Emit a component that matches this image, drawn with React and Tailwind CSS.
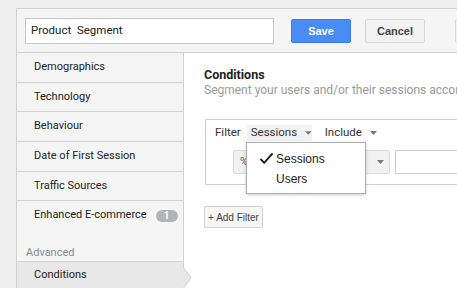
import React from "react";

const roboto = { fontFamily: "Roboto, 'Liberation Sans', sans-serif" };
const arial = { fontFamily: "'Liberation Sans', Arial, sans-serif" };

function Caret({ className = "" }) {
  return (
    <svg width="7" height="4" viewBox="0 0 7 4" className={className}>
      <path d="M0 0 L7 0 L3.5 4 Z" fill="#777" />
    </svg>
  );
}

function NavItem({ label, h, badge, border = true }) {
  return (
    <div
      className={`flex items-center pl-[17px] text-[11px] text-[#222] ${border ? "border-b border-[#d2d2d2]" : ""}`}
      style={{ height: h }}
    >
      <span>{label}</span>
      {badge && (
        <span className="ml-[9px] flex h-[12px] w-[22px] items-center justify-center rounded-full bg-[#b4b4b4] text-[10px] font-bold leading-none text-white">
          {badge}
        </span>
      )}
    </div>
  );
}

export default function App() {
  return (
    <div
      className="relative h-[288px] w-[457px] overflow-hidden bg-[#ededed] pl-[16px] pt-[8px]"
      style={roboto}
    >
      <div className="flex h-[280px] w-[460px] flex-col border-l border-t border-[#d0d0d0] bg-[#f5f5f5]">
        {/* header */}
        <div className="flex h-[44px] shrink-0 items-start border-b border-[#d0d0d0] pl-[8px] pt-[9px]">
          <div className="flex h-[26px] w-[249px] shrink-0 items-center border border-[#c6c6c6] bg-white pl-[5px] text-[11.5px] text-[#222]">
            Product&nbsp; Segment
          </div>
          <div
            className="ml-[17px] mt-[1px] flex h-[24px] w-[60px] shrink-0 items-center justify-center rounded-[2px] border border-[#3b7ded] bg-[#4a8cf6] text-[11px] font-bold text-white"
            style={arial}
          >
            Save
          </div>
          <div
            className="ml-[14px] mt-[1px] flex h-[24px] w-[60px] shrink-0 items-center justify-center rounded-[2px] border border-[#d8d8d8] bg-[#f3f3f3] text-[11px] font-bold text-[#444]"
            style={arial}
          >
            Cancel
          </div>
          <div className="ml-[30px] mt-[1px] h-[24px] w-[60px] shrink-0 rounded-[2px] border border-[#d8d8d8] bg-[#f3f3f3]" />
        </div>

        {/* body */}
        <div className="flex flex-1">
          {/* sidebar */}
          <div className="relative z-10 flex w-[167px] shrink-0 flex-col border-r border-[#d0d0d0]">
            <NavItem label="Demographics" h={30} />
            <NavItem label="Technology" h={29} />
            <NavItem label="Behaviour" h={30} />
            <NavItem label="Date of First Session" h={30} />
            <NavItem label="Traffic Sources" h={29} />
            <NavItem label="Enhanced E-commerce" h={29} badge="1" border={false} />
            <div className="h-[16px]" />
            <div className="flex h-[14px] items-center pl-[9px] text-[11px] text-[#8a8a8a]">
              Advanced
            </div>
            <div className="mt-[1px] flex flex-1 items-center border-t border-[#d0d0d0] bg-[#e8e8e8] pl-[17px] text-[11px] text-[#222]">
              Conditions
            </div>
            <svg
              width="9"
              height="22"
              viewBox="0 0 9 22"
              className="absolute right-[-9px] top-[214px]"
            >
              <path d="M0 0 L8 11 L0 22 Z" fill="#e8e8e8" />
              <path d="M0 0 L8 11 L0 22" fill="none" stroke="#d0d0d0" strokeWidth="1" />
            </svg>
          </div>

          {/* content */}
          <div className="relative flex-1 bg-white pl-[20px] pt-[14px]">
            <div className="text-[12.5px] font-bold leading-[16px] text-[#222]">Conditions</div>
            <div className="whitespace-nowrap text-[12px] leading-[15px] text-[#9a9a9a]">
              Segment your users and/or their sessions according
            </div>

            <div className="ml-[1px] mt-[21px] h-[66px] w-[300px] border border-[#cfcfcf] pl-[9px] pt-[5px]">
              <div className="flex h-[16px] items-center text-[11.5px] text-[#333]">
                <span>Filter</span>
                <div className="ml-[6px] flex h-[16px] w-[65px] items-center bg-[#f1f1f1] pl-[4px] text-[#333]">
                  <span>Sessions</span>
                  <Caret className="ml-[8px]" />
                </div>
                <span className="ml-[13px]">Include</span>
                <Caret className="ml-[8px]" />
              </div>
              <div className="ml-[18px] mt-[9px] flex">
                <div className="flex h-[24px] w-[157px] items-center justify-between rounded-[2px] border border-[#dadada] bg-[#f1f1f1] pl-[6px] pr-[5px] text-[11px] text-[#555]">
                  <span>%</span>
                  <Caret />
                </div>
                <div className="ml-[5px] h-[24px] w-[80px] border border-[#cfcfcf] bg-white" />
              </div>
            </div>

            <div
              className="mt-[21px] flex h-[22px] w-[59px] items-center justify-center rounded-[2px] border border-[#d0d0d0] bg-[#f6f6f6] text-[10px] text-[#444]"
              style={arial}
            >
              + Add Filter
            </div>

            {/* dropdown menu */}
            <div
              className="absolute left-[62px] top-[89px] h-[52px] w-[120px] border border-[#adadad] bg-white shadow-[0_1px_3px_rgba(0,0,0,0.2)]"
              style={arial}
            >
              <div className="flex h-[27px] items-center pt-[4px] text-[12px] text-[#222]">
                <svg width="13" height="11" viewBox="0 0 13 11" className="ml-[13px] mr-[3px]">
                  <path d="M1 6.5 L4.2 9.8 L12 1" fill="none" stroke="#222" strokeWidth="1.9" strokeLinecap="round" strokeLinejoin="round" />
                </svg>
                <span>Sessions</span>
              </div>
              <div className="flex h-[18px] items-center pl-[29px] text-[12px] text-[#222]">Users</div>
            </div>
          </div>
        </div>
      </div>
    </div>
  );
}
